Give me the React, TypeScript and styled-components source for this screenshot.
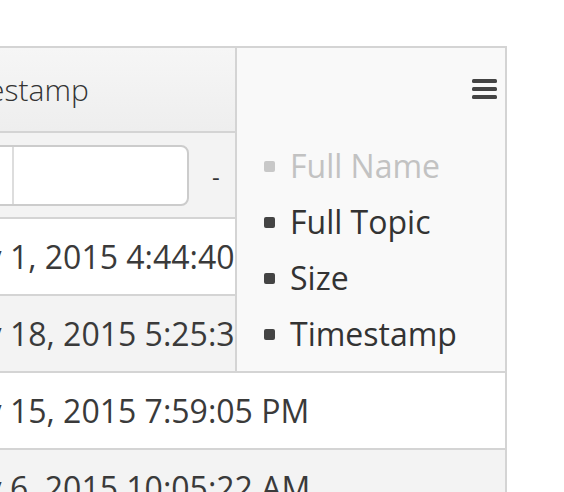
import styled, { createGlobalStyle } from "styled-components";

const GlobalStyle = createGlobalStyle`
  body {
    margin: 0;
    background: #fff;
    font-family: "Open Sans", "DejaVu Sans", sans-serif;
  }
`;

const Page = styled.div`
  padding-top: 46px;
`;

const Grid = styled.div`
  position: relative;
  width: 507px;
  height: 446px;
  box-sizing: border-box;
  border-top: 2px solid #d4d4d4;
  border-right: 2px solid #d4d4d4;
  overflow: hidden;
`;

const Column = styled.div`
  margin-left: -75px;
`;

const HeaderRow = styled.div`
  height: 83px;
  display: flex;
  align-items: center;
  padding-left: 14px;
  background: linear-gradient(to bottom, #f6f6f6, #eeeeee);
  border-bottom: 2px solid #d4d4d4;
  font-size: 30px;
  font-weight: 300;
  color: #333;
  white-space: nowrap;
`;

const FilterRow = styled.div`
  height: 84px;
  display: flex;
  align-items: center;
  background: #f3f3f3;
  border-bottom: 2px solid #d4d4d4;
  color: #333;
`;

const InputGroup = styled.div`
  display: flex;
  height: 61px;
  width: 264px;
  box-sizing: border-box;
  border: 2px solid #cccccc;
  border-radius: 8px;
  background: #fff;
  overflow: hidden;
`;

const Addon = styled.div`
  width: 85px;
  border-right: 2px solid #dddddd;
  background: #fff;
`;

const Dash = styled.span`
  margin-left: 23px;
  margin-top: 2px;
  font-size: 24px;
`;

const Row = styled.div<{ $alt?: boolean }>`
  height: 75px;
  display: flex;
  align-items: center;
  padding-left: 14px;
  background: ${({ $alt }) => ($alt ? "#f3f3f3" : "#ffffff")};
  border-bottom: 2px solid #d4d4d4;
  font-size: 32px;
  color: #3a3a3a;
  white-space: nowrap;
`;

const Menu = styled.div`
  position: absolute;
  top: 0;
  right: 0;
  width: 270px;
  height: 325px;
  box-sizing: border-box;
  border-left: 2px solid #d4d4d4;
  border-bottom: 2px solid #d4d4d4;
  background: #f9f9f9;
  display: flex;
  flex-direction: column;
`;

const MenuTop = styled.div`
  display: flex;
  justify-content: flex-end;
  padding: 31px 7px 0 0;
  height: 58px;
`;

const MenuList = styled.ul`
  list-style: none;
  margin: 0;
  padding: 0 0 0 27px;
`;

const MenuItem = styled.li<{ $muted?: boolean }>`
  display: flex;
  align-items: center;
  height: 56px;
  font-size: 32px;
  color: ${({ $muted }) => ($muted ? "#c2c2c2" : "#333")};
`;

const Bullet = styled.span<{ $muted?: boolean }>`
  width: 11px;
  height: 11px;
  border-radius: 2px;
  margin-right: 15px;
  margin-top: 2px;
  background: ${({ $muted }) => ($muted ? "#c8c8c8" : "#444")};
`;

const rows = [
  "May 1, 2015 4:44:40 PM",
  "May 18, 2015 5:25:30 AM",
  "May 15, 2015 7:59:05 PM",
  "May 6, 2015 10:05:22 AM",
];

const columns = [
  { name: "Full Name", muted: true },
  { name: "Full Topic" },
  { name: "Size" },
  { name: "Timestamp" },
];

function MenuIcon() {
  return (
    <svg width="26" height="22" viewBox="0 0 26 22">
      <rect x="0" y="0" width="25" height="4" rx="1.5" fill="#444" />
      <rect x="0" y="8" width="25" height="4" rx="1.5" fill="#444" />
      <rect x="0" y="16" width="25" height="4" rx="1.5" fill="#444" />
    </svg>
  );
}

export default function App() {
  return (
    <Page>
      <GlobalStyle />
      <Grid>
        <Column>
          <HeaderRow>Timestamp</HeaderRow>
          <FilterRow>
            <InputGroup>
              <Addon />
            </InputGroup>
            <Dash>-</Dash>
          </FilterRow>
          {rows.map((r, i) => (
            <Row key={r} $alt={i % 2 === 1}>
              {r}
            </Row>
          ))}
        </Column>
        <Menu>
          <MenuTop>
            <MenuIcon />
          </MenuTop>
          <MenuList>
            {columns.map((c) => (
              <MenuItem key={c.name} $muted={c.muted}>
                <Bullet $muted={c.muted} />
                {c.name}
              </MenuItem>
            ))}
          </MenuList>
        </Menu>
      </Grid>
    </Page>
  );
}
